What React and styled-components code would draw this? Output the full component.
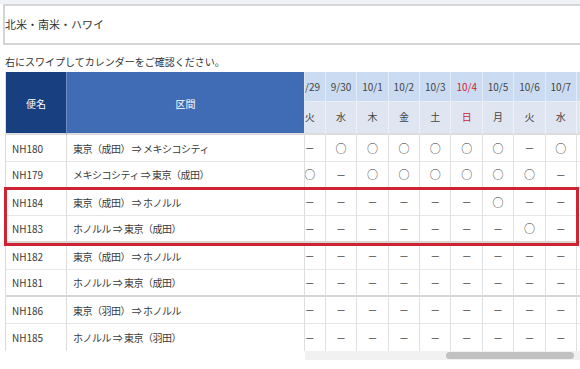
import React, { useLayoutEffect, useRef } from 'react';
import styled, { createGlobalStyle } from 'styled-components';

const GlobalStyle = createGlobalStyle`
  html, body { margin: 0; padding: 0; background: #fff; overflow: hidden; }
  body {
    font-family: "Noto Sans CJK JP", "Noto Sans", sans-serif;
    color: #333;
  }
`;

const COL_W = 31.4;
const SCROLL_X = 293;

const Page = styled.div`
  width: 600px;
  border-top: 4px solid #eff3f8;
`;

const RegionBox = styled.div`
  margin-left: 3px;
  height: 41px;
  box-sizing: border-box;
  border: 2px solid #d5d5d5;
  border-right: none;
  display: flex;
  align-items: center;
  padding-bottom: 2px;
  font-size: 11px;
  color: #333;
`;

const Hint = styled.p`
  margin: 0;
  padding: 10px 0 3px 5px;
  font-size: 10px;
  line-height: 14px;
  color: #333;
`;

const TableFrame = styled.div`
  position: relative;
  margin-left: 5px;
  width: 595px;
  display: flex;
  align-items: flex-start;
`;

const FixedTable = styled.div`
  flex: none;
  display: grid;
  grid-template-columns: 61px 238px;
  border-left: 1px solid #dcdcdc;
`;

const HeadCell = styled.div`
  height: 63px;
  box-sizing: border-box;
  display: flex;
  align-items: center;
  justify-content: center;
  padding-top: 1px;
  background: ${(p) => (p.$dark ? '#183f80' : '#3f6cb5')};
  border-right: 1px solid ${(p) => (p.$dark ? '#6f8fc4' : '#dde6f2')};
  border-bottom: 2px solid #dcdcdc;
  color: #fff;
  font-size: 10px;
`;

const BodyCell = styled.div`
  height: 27px;
  box-sizing: border-box;
  display: flex;
  align-items: center;
  padding-left: 6px;
  border-right: 1px solid #dedede;
  border-bottom: ${(p) =>
    p.$edge === 'group' ? '2px solid #d6d6d6' : p.$edge === 'none' ? 'none' : '1px solid #e6e6e6'};
  font-size: 10px;
  color: #3a3a3a;
  white-space: nowrap;
  letter-spacing: ${(p) => (p.$route ? '-0.5px' : '0')};
`;

const DatePane = styled.div`
  flex: 1;
  min-width: 0;
  display: flex;
  flex-direction: column;
`;

const DateViewport = styled.div`
  overflow: hidden;
`;

const DateGrid = styled.div`
  display: grid;
  grid-template-columns: repeat(${(p) => p.$cols}, ${COL_W}px);
  width: max-content;
`;

const DayHead = styled.div`
  height: 30px;
  box-sizing: border-box;
  display: flex;
  align-items: center;
  justify-content: center;
  background: #cbdcf2;
  border-right: 1px solid #e3ebf7;
  border-bottom: 1px solid #e8eef7;
  font-size: 10px;
  color: ${(p) => (p.$sunday ? '#cf2334' : '#444')};
`;

const WeekHead = styled(DayHead)`
  height: 33px;
  background: #dfe6f1;
  border-right: 1px solid #eef2f8;
  border-bottom: 2px solid #dcdcdc;
  padding-bottom: 2px;
`;

const MarkCell = styled.div`
  height: 27px;
  box-sizing: border-box;
  display: flex;
  align-items: center;
  justify-content: center;
  border-right: 1px solid #e0e0e0;
  border-bottom: ${(p) =>
    p.$edge === 'group' ? '2px solid #d6d6d6' : p.$edge === 'none' ? 'none' : '1px solid #e6e6e6'};
  color: ${(p) => (p.$on ? '#333' : '#444')};
  font-size: ${(p) => (p.$on ? '11px' : '10px')};
  line-height: 1;
`;

const ScrollTrack = styled.div`
  height: 9px;
  background: #f1f1f1;
  display: flex;
  align-items: center;
`;

const ScrollThumb = styled.div`
  margin-left: 141px;
  width: 128px;
  height: 7px;
  border-radius: 4px;
  background: #c1c1c1;
`;

const Highlight = styled.div`
  position: absolute;
  left: -1px;
  top: 115px;
  width: 575px;
  height: 59px;
  box-sizing: border-box;
  border: 3px solid #cf2334;
  pointer-events: none;
`;

const WEEK = ['日', '月', '火', '水', '木', '金', '土'];

const days = Array.from({ length: 19 }, (_, i) => {
  const d = new Date(2020, 8, 20 + i);
  return { label: `${d.getMonth() + 1}/${d.getDate()}`, wd: d.getDay() };
});

const flights = [
  { no: 'NH180', route: '東京（成田） ⇒ メキシコシティ', marks: 'o-ooooo-o' + '-oooooo-o' + 'o' },
  { no: 'NH179', route: 'メキシコシティ ⇒ 東京（成田）', marks: '-o-oooooo' + 'o-oooooo-' + 'o', edge: 'group' },
  { no: 'NH184', route: '東京（成田） ⇒ ホノルル', marks: '---------' + '------o--' + '-' },
  { no: 'NH183', route: 'ホノルル ⇒ 東京（成田）', marks: '---------' + '-------o-' + '-', edge: 'group' },
  { no: 'NH182', route: '東京（成田） ⇒ ホノルル', marks: '-'.repeat(19) },
  { no: 'NH181', route: 'ホノルル ⇒ 東京（成田）', marks: '-'.repeat(19), edge: 'group' },
  { no: 'NH186', route: '東京（羽田） ⇒ ホノルル', marks: '-'.repeat(19) },
  { no: 'NH185', route: 'ホノルル ⇒ 東京（羽田）', marks: '-'.repeat(19), edge: 'none' },
];

export default function App() {
  const viewport = useRef(null);

  useLayoutEffect(() => {
    if (viewport.current) viewport.current.scrollLeft = SCROLL_X;
  }, []);

  return (
    <>
      <GlobalStyle />
      <Page>
        <RegionBox>北米・南米・ハワイ</RegionBox>
        <Hint>右にスワイプしてカレンダーをご確認ください。</Hint>
        <TableFrame>
          <FixedTable>
            <HeadCell $dark>便名</HeadCell>
            <HeadCell>区間</HeadCell>
            {flights.map((f) => (
              <React.Fragment key={f.no}>
                <BodyCell $edge={f.edge}>{f.no}</BodyCell>
                <BodyCell $edge={f.edge} $route>{f.route}</BodyCell>
              </React.Fragment>
            ))}
          </FixedTable>
          <DatePane>
            <DateViewport ref={viewport}>
              <DateGrid $cols={days.length}>
                {days.map((d) => (
                  <DayHead key={`d${d.label}`} $sunday={d.wd === 0}>
                    {d.label}
                  </DayHead>
                ))}
                {days.map((d) => (
                  <WeekHead key={`w${d.label}`} $sunday={d.wd === 0}>
                    {WEEK[d.wd]}
                  </WeekHead>
                ))}
                {flights.map((f) =>
                  days.map((d, i) => {
                    const on = f.marks[i] === 'o';
                    return (
                      <MarkCell key={`${f.no}${d.label}`} $on={on} $edge={f.edge}>
                        {on ? '○' : '－'}
                      </MarkCell>
                    );
                  })
                )}
              </DateGrid>
            </DateViewport>
            <ScrollTrack>
              <ScrollThumb />
            </ScrollTrack>
          </DatePane>
          <Highlight />
        </TableFrame>
      </Page>
    </>
  );
}
